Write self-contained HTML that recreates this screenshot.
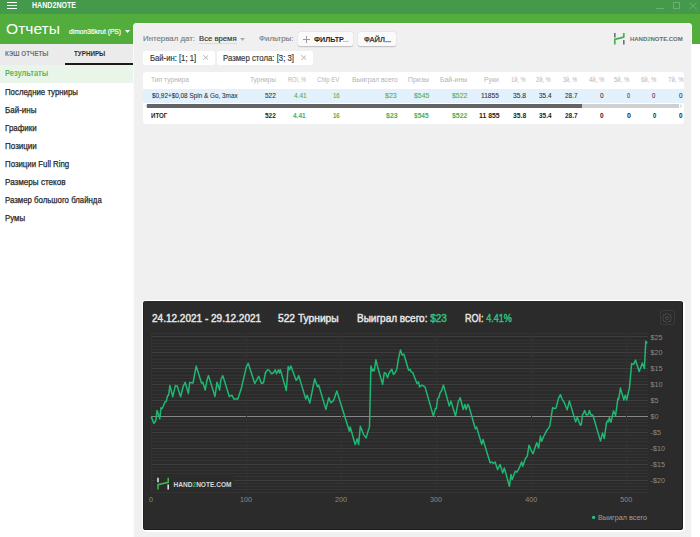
<!DOCTYPE html>
<html><head><meta charset="utf-8">
<style>
*{margin:0;padding:0;box-sizing:border-box}
html,body{width:700px;height:537px;overflow:hidden;background:#fff}
body{position:relative;font-family:"Liberation Sans",sans-serif;color:#333}
.a{position:absolute;white-space:nowrap}
.t{position:absolute;white-space:nowrap;line-height:1}
</style></head><body>

<!-- title bar -->
<div class="a" style="left:0;top:0;width:700px;height:14px;background:#45994b"></div>
<div class="a" style="left:7px;top:2px;width:10px;height:1.4px;background:#fff"></div>
<div class="a" style="left:7px;top:4.9px;width:10px;height:1.4px;background:#fff"></div>
<div class="a" style="left:7px;top:7.8px;width:10px;height:1.4px;background:#fff"></div>
<div class="a" style="left:656.3px;top:8px;width:7.3px;height:1px;background:rgba(255,255,255,.22)"></div>
<div class="a" style="left:673px;top:2px;width:7px;height:7px;border:1px solid rgba(255,255,255,.22)"></div>
<svg class="a" style="left:689px;top:2px" width="8" height="8" viewBox="0 0 8 8"><path d="M0.3,0.3 L7.7,7.3 M7.7,0.3 L0.3,7.3" stroke="rgba(255,255,255,.22)" stroke-width="1"/></svg>

<!-- header band -->
<div class="a" style="left:0;top:14px;width:700px;height:30px;background:#52ad3c"></div>
<svg class="a" style="left:124.5px;top:30px" width="5" height="3" viewBox="0 0 5 3"><path d="M0,0 H5 L2.5,3 Z" fill="#fff"/></svg>

<!-- sidebar -->
<div class="a" style="left:0;top:44px;width:134px;height:21px;background:#ebebeb"></div>
<div class="a" style="left:65px;top:63px;width:69px;height:2px;background:#1a1a1a"></div>
<div class="a" style="left:0;top:65px;width:134px;height:17.5px;background:#e9f5e9"></div>

<!-- main card -->
<div class="a" style="left:133px;top:22.5px;width:559px;height:530px;background:#f0f0f0;border:1px solid #fafafa;border-radius:3px"></div>
<div class="a" style="left:199px;top:43px;width:37.5px;height:1px;background:#dadada"></div>
<svg class="a" style="left:240px;top:37.8px" width="5" height="3" viewBox="0 0 5 3"><path d="M0,0 H5 L2.5,3 Z" fill="#aaa"/></svg>
<div class="a" style="left:298px;top:32px;width:55px;height:13.5px;background:#fafafa;border-radius:2px;box-shadow:0 0.8px 1.2px rgba(0,0,0,.22)"></div>
<svg class="a" style="left:302.5px;top:35.8px" width="7" height="7" viewBox="0 0 7 7"><path d="M3.5,0 V7 M0,3.5 H7" stroke="#9a9a9a" stroke-width="1"/></svg>
<div class="a" style="left:358px;top:32px;width:37.5px;height:13.5px;background:#fafafa;border-radius:2px;box-shadow:0 0.8px 1.2px rgba(0,0,0,.22)"></div>

<!-- logo -->
<svg class="a" style="left:610px;top:30px" width="20" height="18" viewBox="610 30 20 18">
<path d="M614.8,33 V37.4" stroke="#707070" stroke-width="1.6" fill="none"/>
<path d="M614.8,44.5 V39.3 L623.8,37.2 V33" stroke="#3fb54a" stroke-width="1.7" fill="none" stroke-linejoin="round"/>
<path d="M623.8,40 V44.4" stroke="#707070" stroke-width="1.6" fill="none"/>
</svg>

<!-- chips -->
<div class="a" style="left:143px;top:51px;width:71.7px;height:13.6px;background:#fff;border-radius:2px"></div>
<svg class="a" style="left:202.5px;top:55.2px" width="5.6" height="5.2" viewBox="0 0 5.6 5.2"><path d="M0.2,0.2 L5.4,5 M5.4,0.2 L0.2,5" stroke="#aaa" stroke-width="0.9"/></svg>
<div class="a" style="left:217px;top:51px;width:95.6px;height:13.6px;background:#fff;border-radius:2px"></div>
<svg class="a" style="left:300.6px;top:55.2px" width="5.6" height="5.2" viewBox="0 0 5.6 5.2"><path d="M0.2,0.2 L5.4,5 M5.4,0.2 L0.2,5" stroke="#aaa" stroke-width="0.9"/></svg>

<!-- table -->
<div class="a" style="left:143px;top:71.5px;width:540.5px;height:52.5px;background:#fff;border-radius:3px"></div>
<div class="a" style="left:143px;top:88.7px;width:540.5px;height:14.5px;background:#e3f1fc"></div>
<div class="a" style="left:147px;top:103.6px;width:532px;height:4.2px;background:#d0d0d0"></div>
<div class="a" style="left:147px;top:103.6px;width:435px;height:4.2px;background:#636363"></div>
<svg class="a" style="left:143.5px;top:104px" width="3" height="4" viewBox="0 0 3 4"><path d="M3,0 L0.5,2 L3,4Z" fill="#ddd"/></svg>
<svg class="a" style="left:680px;top:104px" width="3" height="4" viewBox="0 0 3 4"><path d="M0,0 L2.5,2 L0,4Z" fill="#ddd"/></svg>


<!-- chart panel -->
<div class="a" style="left:141.5px;top:299.5px;width:543px;height:232.5px;background:#fff;border-radius:5px"></div>
<div class="a" style="left:143px;top:301px;width:540px;height:229px;background:#2b2b2b;border-radius:3px;box-shadow:inset -1px -1px 0 #1c1c1c,inset 0.6px 0 0 #1e1e1e"></div>
<div class="a" style="left:659.7px;top:310.3px;width:15px;height:14.6px;border:1px solid #3a3a3a;border-radius:2px"></div>
<svg class="a" style="left:661px;top:311.7px" width="12" height="12" viewBox="-6 -6 12 12">
<g fill="none" stroke="#4a4a4a" stroke-width="1">
<path d="M0,-4.8 L1.2,-3.6 L3.4,-3.4 L3.6,-1.2 L4.8,0 L3.6,1.2 L3.4,3.4 L1.2,3.6 L0,4.8 L-1.2,3.6 L-3.4,3.4 L-3.6,1.2 L-4.8,0 L-3.6,-1.2 L-3.4,-3.4 L-1.2,-3.6 Z"/>
<circle cx="0" cy="0" r="1.5"/>
</g></svg>
<svg width="700" height="537" viewBox="0 0 700 537" style="position:absolute;left:0;top:0" font-family="Liberation Sans, sans-serif">
<line x1="151.0" y1="492.5" x2="648.0" y2="492.5" stroke="#333333" stroke-width="1"/><line x1="151.0" y1="489.5" x2="648.0" y2="489.5" stroke="#333333" stroke-width="1"/><line x1="151.0" y1="486.5" x2="648.0" y2="486.5" stroke="#333333" stroke-width="1"/><line x1="151.0" y1="483.5" x2="648.0" y2="483.5" stroke="#333333" stroke-width="1"/><line x1="151.0" y1="476.5" x2="648.0" y2="476.5" stroke="#333333" stroke-width="1"/><line x1="151.0" y1="473.5" x2="648.0" y2="473.5" stroke="#333333" stroke-width="1"/><line x1="151.0" y1="470.5" x2="648.0" y2="470.5" stroke="#333333" stroke-width="1"/><line x1="151.0" y1="467.5" x2="648.0" y2="467.5" stroke="#333333" stroke-width="1"/><line x1="151.0" y1="460.5" x2="648.0" y2="460.5" stroke="#333333" stroke-width="1"/><line x1="151.0" y1="457.5" x2="648.0" y2="457.5" stroke="#333333" stroke-width="1"/><line x1="151.0" y1="454.5" x2="648.0" y2="454.5" stroke="#333333" stroke-width="1"/><line x1="151.0" y1="451.5" x2="648.0" y2="451.5" stroke="#333333" stroke-width="1"/><line x1="151.0" y1="445.5" x2="648.0" y2="445.5" stroke="#333333" stroke-width="1"/><line x1="151.0" y1="441.5" x2="648.0" y2="441.5" stroke="#333333" stroke-width="1"/><line x1="151.0" y1="438.5" x2="648.0" y2="438.5" stroke="#333333" stroke-width="1"/><line x1="151.0" y1="435.5" x2="648.0" y2="435.5" stroke="#333333" stroke-width="1"/><line x1="151.0" y1="429.5" x2="648.0" y2="429.5" stroke="#333333" stroke-width="1"/><line x1="151.0" y1="425.5" x2="648.0" y2="425.5" stroke="#333333" stroke-width="1"/><line x1="151.0" y1="422.5" x2="648.0" y2="422.5" stroke="#333333" stroke-width="1"/><line x1="151.0" y1="419.5" x2="648.0" y2="419.5" stroke="#333333" stroke-width="1"/><line x1="151.0" y1="413.5" x2="648.0" y2="413.5" stroke="#333333" stroke-width="1"/><line x1="151.0" y1="410.5" x2="648.0" y2="410.5" stroke="#333333" stroke-width="1"/><line x1="151.0" y1="406.5" x2="648.0" y2="406.5" stroke="#333333" stroke-width="1"/><line x1="151.0" y1="403.5" x2="648.0" y2="403.5" stroke="#333333" stroke-width="1"/><line x1="151.0" y1="397.5" x2="648.0" y2="397.5" stroke="#333333" stroke-width="1"/><line x1="151.0" y1="394.5" x2="648.0" y2="394.5" stroke="#333333" stroke-width="1"/><line x1="151.0" y1="390.5" x2="648.0" y2="390.5" stroke="#333333" stroke-width="1"/><line x1="151.0" y1="387.5" x2="648.0" y2="387.5" stroke="#333333" stroke-width="1"/><line x1="151.0" y1="381.5" x2="648.0" y2="381.5" stroke="#333333" stroke-width="1"/><line x1="151.0" y1="378.5" x2="648.0" y2="378.5" stroke="#333333" stroke-width="1"/><line x1="151.0" y1="375.5" x2="648.0" y2="375.5" stroke="#333333" stroke-width="1"/><line x1="151.0" y1="371.5" x2="648.0" y2="371.5" stroke="#333333" stroke-width="1"/><line x1="151.0" y1="365.5" x2="648.0" y2="365.5" stroke="#333333" stroke-width="1"/><line x1="151.0" y1="362.5" x2="648.0" y2="362.5" stroke="#333333" stroke-width="1"/><line x1="151.0" y1="359.5" x2="648.0" y2="359.5" stroke="#333333" stroke-width="1"/><line x1="151.0" y1="355.5" x2="648.0" y2="355.5" stroke="#333333" stroke-width="1"/><line x1="151.0" y1="349.5" x2="648.0" y2="349.5" stroke="#333333" stroke-width="1"/><line x1="151.0" y1="346.5" x2="648.0" y2="346.5" stroke="#333333" stroke-width="1"/><line x1="151.0" y1="343.5" x2="648.0" y2="343.5" stroke="#333333" stroke-width="1"/><line x1="151.0" y1="340.5" x2="648.0" y2="340.5" stroke="#333333" stroke-width="1"/><line x1="151.0" y1="333.5" x2="648.0" y2="333.5" stroke="#333333" stroke-width="1"/><line x1="151.0" y1="480.5" x2="648.0" y2="480.5" stroke="#3e3e3e" stroke-width="1"/><line x1="151.0" y1="464.5" x2="648.0" y2="464.5" stroke="#3e3e3e" stroke-width="1"/><line x1="151.0" y1="448.5" x2="648.0" y2="448.5" stroke="#3e3e3e" stroke-width="1"/><line x1="151.0" y1="432.5" x2="648.0" y2="432.5" stroke="#3e3e3e" stroke-width="1"/><line x1="151.0" y1="400.5" x2="648.0" y2="400.5" stroke="#3e3e3e" stroke-width="1"/><line x1="151.0" y1="384.5" x2="648.0" y2="384.5" stroke="#3e3e3e" stroke-width="1"/><line x1="151.0" y1="368.5" x2="648.0" y2="368.5" stroke="#3e3e3e" stroke-width="1"/><line x1="151.0" y1="352.5" x2="648.0" y2="352.5" stroke="#3e3e3e" stroke-width="1"/><line x1="151.0" y1="336.5" x2="648.0" y2="336.5" stroke="#3e3e3e" stroke-width="1"/><line x1="151.0" y1="416.5" x2="648.0" y2="416.5" stroke="#888888" stroke-width="1"/><line x1="151.5" y1="333.0" x2="151.5" y2="492.5" stroke="#323232" stroke-width="1"/><line x1="246.5" y1="333.0" x2="246.5" y2="492.5" stroke="#323232" stroke-width="1"/><line x1="341.5" y1="333.0" x2="341.5" y2="492.5" stroke="#323232" stroke-width="1"/><line x1="436.5" y1="333.0" x2="436.5" y2="492.5" stroke="#323232" stroke-width="1"/><line x1="531.5" y1="333.0" x2="531.5" y2="492.5" stroke="#323232" stroke-width="1"/><line x1="626.5" y1="333.0" x2="626.5" y2="492.5" stroke="#323232" stroke-width="1"/>
<text x="650.5" y="482.6" fill="#8a8a8a" font-size="7.2">-$20</text><text x="650.5" y="466.7" fill="#8a8a8a" font-size="7.2">-$15</text><text x="650.5" y="450.8" fill="#8a8a8a" font-size="7.2">-$10</text><text x="650.5" y="434.9" fill="#8a8a8a" font-size="7.2">-$5</text><text x="650.5" y="419.0" fill="#8a8a8a" font-size="7.2">$0</text><text x="650.5" y="403.1" fill="#8a8a8a" font-size="7.2">$5</text><text x="650.5" y="387.2" fill="#8a8a8a" font-size="7.2">$10</text><text x="650.5" y="371.3" fill="#8a8a8a" font-size="7.2">$15</text><text x="650.5" y="355.4" fill="#8a8a8a" font-size="7.2">$20</text><text x="650.5" y="339.5" fill="#8a8a8a" font-size="7.2">$25</text>
<text x="151.0" y="502" fill="#8a8a8a" font-size="7.2" text-anchor="middle">0</text><text x="246.0" y="502" fill="#8a8a8a" font-size="7.2" text-anchor="middle">100</text><text x="341.1" y="502" fill="#8a8a8a" font-size="7.2" text-anchor="middle">200</text><text x="436.1" y="502" fill="#8a8a8a" font-size="7.2" text-anchor="middle">300</text><text x="531.2" y="502" fill="#8a8a8a" font-size="7.2" text-anchor="middle">400</text><text x="626.2" y="502" fill="#8a8a8a" font-size="7.2" text-anchor="middle">500</text>
<path d="M151.3,416.9 L153.9,423.4 L155.8,420.8 L157.1,410.4 L159.7,418.9 L161,407.8 L162.3,408.5 L165,402 L166.3,401.3 L167.6,395.4 L168.6,395.4 L169.9,385.6 L172.8,396.7 L175.4,385.6 L177.3,386.3 L180.6,396.7 L183.2,386.3 L185.2,382.4 L188.4,393.5 L189.7,382.4 L193,383 L196.2,366.1 L201.5,383 L202.8,382.4 L205.2,390 L207.2,379.5 L208.5,375.6 L215,396.5 L217,382.2 L219.6,390 L220.9,379.5 L222.8,375.6 L229.3,396.5 L231.9,395.2 L233.9,399.1 L237.8,399.1 L241.1,389.3 L246.3,367.2 L248.2,363.3 L254.8,383.5 L257,379.5 L258.7,376.3 L261.5,383.5 L263.5,382.8 L265.4,373 L267.4,369.8 L269.3,370.4 L271.3,373.7 L273.3,373 L275.2,369.8 L276.5,373.7 L278.5,369.8 L279.5,373 L280.4,369.8 L286.3,390.6 L288.2,366.5 L289.6,369.8 L290.9,365.9 L296.1,380.2 L297.4,378.9 L298.7,375.6 L305.8,399.1 L307.2,395.2 L309.8,403 L314.7,378.8 L317.5,386.8 L318.7,385.1 L325.9,409.4 L328.8,397.7 L330.9,402.7 L333.1,401.1 L334.3,398.5 L336.8,391 L349.4,431.2 L350.2,427 L355.2,444.6 L357.3,438.8 L358.6,444.6 L360.3,426.2 L363.6,434.6 L366.1,437.9 L367.8,432.1 L369.5,427 L370.9,366 L372.5,371 L373.4,369.3 L374.2,371 L375.9,359.8 L377.6,366.8 L382.6,384.4 L384.3,372.7 L385.9,373.5 L387.6,377.7 L388.8,373.5 L391.8,369.3 L393.5,374.4 L395.2,372.7 L396.8,369.3 L398.5,358.4 L400.5,350 L402.2,355.1 L403.9,354.2 L408.6,370.2 L410.2,369.3 L411.1,371.8 L412.8,372.7 L417,383.6 L418.6,381.9 L419.5,386.9 L422,385.2 L425,386.9 L433.4,416.1 L435.4,408.6 L436.4,408.6 L437.6,398.5 L438.8,397.7 L440.1,392.7 L441.5,391 L443.5,385.1 L449.3,406.1 L451,401.1 L455.5,416.1 L458.2,401.9 L460.2,397.7 L463.2,409.4 L464.9,404.4 L466.1,409.4 L467.8,404.4 L468.9,406.1 L475.3,428.7 L476.6,427 L481.7,444.4 L483,439.4 L490.1,462.8 L491.8,462 L493.4,463.3 L495.1,462 L497.6,469.5 L500.1,464.5 L502.7,472.9 L504.3,467.9 L509.4,486.3 L511,474.6 L512.2,479.6 L515.2,471.2 L516.9,472.1 L518.9,468.7 L521.6,462 L522.8,466.2 L525.3,458.7 L527.3,456.1 L529,445.2 L531.1,450.3 L533,453.7 L536.7,442.8 L538.7,447.9 L540.4,436.1 L541.7,441.2 L543.4,437 L546.8,430.3 L548.1,428.6 L549.8,426.1 L552.6,407.7 L554.3,408.5 L556,408.2 L558.5,398.4 L560.5,394.7 L562.2,399.3 L563.9,401.8 L567.2,409.8 L569.4,400.9 L575.6,421.9 L577.3,417.2 L580.3,425.2 L581.3,424.7 L582.5,414.7 L583.4,413.8 L584.6,410.5 L586.5,415.1 L588,414.7 L589.4,410.5 L590.9,415.1 L592.2,414.7 L593,415.5 L600.5,441.1 L602.5,433.1 L604.3,438.6 L606.4,423.1 L607.7,420.5 L608.5,421.8 L609.3,417.6 L611,422.2 L613.5,410.9 L615.6,415.5 L617.9,398.5 L618.7,399.2 L620.4,388.1 L623.9,400 L625.3,395.1 L626.7,400 L629.5,387.4 L631.6,363.6 L633,364.3 L634.1,363.6 L635.5,360.1 L639.2,371.6 L642.4,362.9 L644.4,368.5 L645.8,341.3 L646.9,342.7" fill="none" stroke="#1fb873" stroke-width="1.5" stroke-linejoin="round" stroke-linecap="round"/>
<rect x="154" y="476" width="80" height="16" fill="#2b2b2b" fill-opacity="0.85"/>
<g stroke-width="1.6" fill="none">
<path d="M158,477.8 V482.3" stroke="#e0e0e0"/>
<path d="M158,489.6 V484.6 L168.2,482.3 V477.8" stroke="#3fb54a"/>
<path d="M168.2,484.6 V489.6" stroke="#e0e0e0"/>
</g>
<text x="173.5" y="486.8" fill="#d8d8d8" font-size="7" font-weight="bold" textLength="58" lengthAdjust="spacingAndGlyphs">HAND<tspan fill="#3fb54a">2</tspan>NOTE.COM</text>
<circle cx="593.6" cy="517.4" r="1.6" fill="#1fc77a"/>
<text x="598" y="520.2" fill="#a0a0a0" font-size="7.6" textLength="49" lengthAdjust="spacingAndGlyphs">Выиграл всего</text>
</svg>
<div class="t" id="h2n" style="left:32.00px;top:1.08px;font-size:8.7px;font-weight:bold;color:#fff;transform-origin:0 0;transform:scaleX(0.8148)">HAND2NOTE</div>
<div class="t" id="otch" style="left:5.51px;top:21.14px;font-size:15.0px;font-weight:normal;color:#fff;transform-origin:0 0;transform:scaleX(1.0399)">Отчеты</div>
<div class="t" id="dimon" style="left:68.52px;top:28.26px;font-size:8.0px;font-weight:normal;color:#fff;transform-origin:0 0;transform:scaleX(0.8359);-webkit-text-stroke:0.2px #fff">dimon36krut (PS)</div>
<div class="t" id="kesh" style="left:5.03px;top:49.75px;font-size:7.2px;font-weight:bold;color:#707070;transform-origin:0 0;transform:scaleX(0.8682)">КЭШ ОТЧЕТЫ</div>
<div class="t" id="turn" style="left:74.00px;top:49.75px;font-size:7.2px;font-weight:bold;color:#2a2a2a;transform-origin:0 0;transform:scaleX(0.8705)">ТУРНИРЫ</div>
<div class="t" id="s1" style="left:4.99px;top:69.39px;font-size:8.6px;font-weight:bold;color:#5cb85c;transform-origin:0 0;transform:scaleX(0.8703)">Результаты</div>
<div class="t" id="s2" style="left:5.00px;top:88.24px;font-size:9.0px;font-weight:normal;color:#262626;transform-origin:0 0;transform:scaleX(0.8688);-webkit-text-stroke:0.25px #262626">Последние турниры</div>
<div class="t" id="s3" style="left:5.00px;top:106.24px;font-size:9.0px;font-weight:normal;color:#262626;transform-origin:0 0;transform:scaleX(0.8873);-webkit-text-stroke:0.25px #262626">Бай-ины</div>
<div class="t" id="s4" style="left:5.00px;top:123.94px;font-size:9.0px;font-weight:normal;color:#262626;transform-origin:0 0;transform:scaleX(0.8889);-webkit-text-stroke:0.25px #262626">Графики</div>
<div class="t" id="s5" style="left:5.00px;top:141.94px;font-size:9.0px;font-weight:normal;color:#262626;transform-origin:0 0;transform:scaleX(0.8905);-webkit-text-stroke:0.25px #262626">Позиции</div>
<div class="t" id="s6" style="left:5.00px;top:160.34px;font-size:9.0px;font-weight:normal;color:#262626;transform-origin:0 0;transform:scaleX(0.8699);-webkit-text-stroke:0.25px #262626">Позиции Full Ring</div>
<div class="t" id="s7" style="left:5.00px;top:178.24px;font-size:9.0px;font-weight:normal;color:#262626;transform-origin:0 0;transform:scaleX(0.9004);-webkit-text-stroke:0.25px #262626">Размеры стеков</div>
<div class="t" id="s8" style="left:5.00px;top:195.94px;font-size:9.0px;font-weight:normal;color:#262626;transform-origin:0 0;transform:scaleX(0.8685);-webkit-text-stroke:0.25px #262626">Размер большого блайнда</div>
<div class="t" id="s9" style="left:5.00px;top:213.94px;font-size:9.0px;font-weight:normal;color:#262626;transform-origin:0 0;transform:scaleX(0.8732);-webkit-text-stroke:0.25px #262626">Румы</div>
<div class="t" id="interval" style="left:142.50px;top:34.76px;font-size:8.0px;font-weight:normal;color:#7c7c7c;transform-origin:0 0;transform:scaleX(0.9818);-webkit-text-stroke:0.15px #7c7c7c">Интервал дат:</div>
<div class="t" id="vse" style="left:199.03px;top:34.76px;font-size:8.0px;font-weight:normal;color:#333;transform-origin:0 0;transform:scaleX(0.9645);-webkit-text-stroke:0.15px #333">Все время</div>
<div class="t" id="filt" style="left:259.00px;top:34.76px;font-size:8.0px;font-weight:normal;color:#7c7c7c;transform-origin:0 0;transform:scaleX(0.9895);-webkit-text-stroke:0.15px #7c7c7c">Фильтры:</div>
<div class="t" id="fb1" style="left:313.51px;top:35.58px;font-size:7.0px;font-weight:bold;color:#222;transform-origin:0 0;transform:scaleX(1.0247)">ФИЛЬТР<span style="color:#9a9a9a">...</span></div>
<div class="t" id="fb2" style="left:364.00px;top:35.58px;font-size:7.0px;font-weight:normal;color:#2a2a2a;transform-origin:0 0;transform:scaleX(1.0741);-webkit-text-stroke:0.25px #2a2a2a">ФАЙЛ...</div>
<div class="t" id="logo" style="left:629.50px;top:37.24px;font-size:5.6px;font-weight:bold;color:#6a6a6a;transform-origin:0 0;transform:scaleX(1.0657)">HAND<span style="color:#3fb54a">2</span>NOTE.COM</div>
<div class="t" id="chip1" style="left:149.52px;top:54.94px;font-size:8.2px;font-weight:normal;color:#333;transform-origin:0 0;transform:scaleX(0.9388);-webkit-text-stroke:0.15px #333">Бай-ин: [1; 1]</div>
<div class="t" id="chip2" style="left:223.02px;top:54.94px;font-size:8.2px;font-weight:normal;color:#333;transform-origin:0 0;transform:scaleX(0.9516);-webkit-text-stroke:0.15px #333">Размер стола: [3; 3]</div>
<div class="t" id="h0" style="left:151.49px;top:76.08px;font-size:7.0px;font-weight:normal;color:#b4b4b4;transform-origin:0 0;transform:scaleX(0.9558)">Тип турнира</div>
<div class="t" id="h1" style="left:249.50px;top:76.08px;font-size:7.0px;font-weight:normal;color:#b4b4b4;transform-origin:0 0;transform:scaleX(0.9273)">Турниры</div>
<div class="t" id="h2" style="left:287.51px;top:76.08px;font-size:7.0px;font-weight:normal;color:#b4b4b4;transform-origin:0 0;transform:scaleX(0.8012)">ROI, %</div>
<div class="t" id="h3" style="left:317.46px;top:76.08px;font-size:7.0px;font-weight:normal;color:#b4b4b4;transform-origin:0 0;transform:scaleX(0.8701)">Chip EV</div>
<div class="t" id="h4" style="left:351.50px;top:76.08px;font-size:7.0px;font-weight:normal;color:#b4b4b4;transform-origin:0 0;transform:scaleX(0.9667)">Выиграл всего</div>
<div class="t" id="h5" style="left:407.50px;top:76.08px;font-size:7.0px;font-weight:normal;color:#b4b4b4;transform-origin:0 0;transform:scaleX(0.9937)">Призы</div>
<div class="t" id="h6" style="left:440.00px;top:76.08px;font-size:7.0px;font-weight:normal;color:#b4b4b4;transform-origin:0 0;transform:scaleX(0.9859)">Бай-ины</div>
<div class="t" id="h7" style="left:484.00px;top:76.08px;font-size:7.0px;font-weight:normal;color:#b4b4b4;transform-origin:0 0;transform:scaleX(0.9756)">Руки</div>
<div class="t" id="h8" style="left:510.59px;top:76.08px;font-size:7.0px;font-weight:normal;color:#b4b4b4;transform-origin:0 0;transform:scaleX(0.8179)">1й, %</div>
<div class="t" id="h9" style="left:536.15px;top:76.08px;font-size:7.0px;font-weight:normal;color:#b4b4b4;transform-origin:0 0;transform:scaleX(0.8179)">2й, %</div>
<div class="t" id="h10" style="left:563.05px;top:76.08px;font-size:7.0px;font-weight:normal;color:#b4b4b4;transform-origin:0 0;transform:scaleX(0.7843)">3й, %</div>
<div class="t" id="h11" style="left:589.08px;top:76.08px;font-size:7.0px;font-weight:normal;color:#b4b4b4;transform-origin:0 0;transform:scaleX(0.8494)">4й, %</div>
<div class="t" id="h12" style="left:614.49px;top:76.08px;font-size:7.0px;font-weight:normal;color:#b4b4b4;transform-origin:0 0;transform:scaleX(0.8574)">5й, %</div>
<div class="t" id="h13" style="left:641.00px;top:76.08px;font-size:7.0px;font-weight:normal;color:#b4b4b4;transform-origin:0 0;transform:scaleX(0.8494)">6й, %</div>
<div class="t" id="h14" style="left:667.61px;top:76.08px;font-size:7.0px;font-weight:normal;color:#b4b4b4;transform-origin:0 0;transform:scaleX(0.8752)">7й, %</div>
<div class="t" id="r0" style="left:151.52px;top:92.23px;font-size:7.4px;font-weight:normal;color:#303030;transform-origin:0 0;transform:scaleX(0.8628);-webkit-text-stroke:0.08px currentColor">$0,92+$0,08 Spin &amp; Go, 3max</div>
<div class="t" id="r1" style="left:265.01px;top:92.23px;font-size:7.4px;font-weight:normal;color:#303030;transform-origin:0 0;transform:scaleX(0.8789);-webkit-text-stroke:0.08px currentColor">522</div>
<div class="t" id="r2" style="left:293.53px;top:92.23px;font-size:7.4px;font-weight:normal;color:#4caf50;transform-origin:0 0;transform:scaleX(0.8793);-webkit-text-stroke:0.08px currentColor">4.41</div>
<div class="t" id="r3" style="left:332.65px;top:92.23px;font-size:7.4px;font-weight:normal;color:#4caf50;transform-origin:0 0;transform:scaleX(0.8171);-webkit-text-stroke:0.08px currentColor">16</div>
<div class="t" id="r4" style="left:385.04px;top:92.23px;font-size:7.4px;font-weight:normal;color:#4caf50;transform-origin:0 0;transform:scaleX(0.9433);-webkit-text-stroke:0.08px currentColor">$23</div>
<div class="t" id="r5" style="left:414.03px;top:92.23px;font-size:7.4px;font-weight:normal;color:#4caf50;transform-origin:0 0;transform:scaleX(0.9375);-webkit-text-stroke:0.08px currentColor">$545</div>
<div class="t" id="r6" style="left:451.51px;top:92.23px;font-size:7.4px;font-weight:normal;color:#4caf50;transform-origin:0 0;transform:scaleX(0.9375);-webkit-text-stroke:0.08px currentColor">$522</div>
<div class="t" id="r7" style="left:480.55px;top:92.23px;font-size:7.4px;font-weight:normal;color:#303030;transform-origin:0 0;transform:scaleX(0.8933);-webkit-text-stroke:0.08px currentColor">11855</div>
<div class="t" id="r8" style="left:512.50px;top:92.23px;font-size:7.4px;font-weight:normal;color:#303030;transform-origin:0 0;transform:scaleX(0.9082);-webkit-text-stroke:0.08px currentColor">35.8</div>
<div class="t" id="r9" style="left:539.11px;top:92.23px;font-size:7.4px;font-weight:normal;color:#303030;transform-origin:0 0;transform:scaleX(0.8668);-webkit-text-stroke:0.08px currentColor">35.4</div>
<div class="t" id="r10" style="left:565.11px;top:92.23px;font-size:7.4px;font-weight:normal;color:#303030;transform-origin:0 0;transform:scaleX(0.8668);-webkit-text-stroke:0.08px currentColor">28.7</div>
<div class="t" id="r11" style="left:599.67px;top:92.23px;font-size:7.4px;font-weight:normal;color:#303030;transform-origin:0 0;transform:scaleX(0.8670);-webkit-text-stroke:0.08px currentColor">0</div>
<div class="t" id="r12" style="left:626.82px;top:92.23px;font-size:7.4px;font-weight:normal;color:#303030;transform-origin:0 0;transform:scaleX(0.7230);-webkit-text-stroke:0.08px currentColor">0</div>
<div class="t" id="r13" style="left:652.18px;top:92.23px;font-size:7.4px;font-weight:normal;color:#303030;transform-origin:0 0;transform:scaleX(0.7958);-webkit-text-stroke:0.08px currentColor">0</div>
<div class="t" id="r14" style="left:679.00px;top:92.23px;font-size:7.4px;font-weight:normal;color:#303030;transform-origin:0 0;transform:scaleX(0.8665);-webkit-text-stroke:0.08px currentColor">0</div>
<div class="t" id="t0" style="left:151.49px;top:112.23px;font-size:7.4px;font-weight:bold;color:#1e1e1e;transform-origin:0 0;transform:scaleX(0.8348)">ИТОГ</div>
<div class="t" id="t1" style="left:264.93px;top:112.23px;font-size:7.4px;font-weight:bold;color:#1e1e1e;transform-origin:0 0;transform:scaleX(0.8789)">522</div>
<div class="t" id="t2" style="left:293.47px;top:112.23px;font-size:7.4px;font-weight:bold;color:#4caf50;transform-origin:0 0;transform:scaleX(0.8793)">4.41</div>
<div class="t" id="t3" style="left:332.53px;top:112.23px;font-size:7.4px;font-weight:bold;color:#4caf50;transform-origin:0 0;transform:scaleX(0.8171)">16</div>
<div class="t" id="t4" style="left:385.90px;top:112.23px;font-size:7.4px;font-weight:bold;color:#4caf50;transform-origin:0 0;transform:scaleX(0.9499)">$23</div>
<div class="t" id="t5" style="left:413.93px;top:112.23px;font-size:7.4px;font-weight:bold;color:#4caf50;transform-origin:0 0;transform:scaleX(0.8824)">$545</div>
<div class="t" id="t6" style="left:451.51px;top:112.23px;font-size:7.4px;font-weight:bold;color:#4caf50;transform-origin:0 0;transform:scaleX(0.9375)">$522</div>
<div class="t" id="t7" style="left:478.55px;top:112.23px;font-size:7.4px;font-weight:bold;color:#1e1e1e;transform-origin:0 0;transform:scaleX(0.9307)">11 855</div>
<div class="t" id="t8" style="left:512.51px;top:112.23px;font-size:7.4px;font-weight:bold;color:#1e1e1e;transform-origin:0 0;transform:scaleX(0.9129)">35.8</div>
<div class="t" id="t9" style="left:539.06px;top:112.23px;font-size:7.4px;font-weight:bold;color:#1e1e1e;transform-origin:0 0;transform:scaleX(0.8668)">35.4</div>
<div class="t" id="t10" style="left:564.89px;top:112.23px;font-size:7.4px;font-weight:bold;color:#1e1e1e;transform-origin:0 0;transform:scaleX(0.8764)">28.7</div>
<div class="t" id="t11" style="left:599.64px;top:112.23px;font-size:7.4px;font-weight:bold;color:#1e1e1e;transform-origin:0 0;transform:scaleX(0.8670)">0</div>
<div class="t" id="t12" style="left:626.96px;top:112.23px;font-size:7.4px;font-weight:bold;color:#1e1e1e;transform-origin:0 0;transform:scaleX(0.9640)">0</div>
<div class="t" id="t13" style="left:652.95px;top:112.23px;font-size:7.4px;font-weight:bold;color:#1e1e1e;transform-origin:0 0;transform:scaleX(0.7958)">0</div>
<div class="t" id="t14" style="left:679.00px;top:112.23px;font-size:7.4px;font-weight:bold;color:#1e1e1e;transform-origin:0 0;transform:scaleX(0.8665)">0</div>
<div class="t" id="ct1" style="left:151.51px;top:312.73px;font-size:10.8px;font-weight:normal;color:#e6e6e6;transform-origin:0 0;transform:scaleX(0.9273);-webkit-text-stroke:0.45px #e6e6e6">24.12.2021 - 29.12.2021</div>
<div class="t" id="ct2" style="left:277.51px;top:312.73px;font-size:10.8px;font-weight:normal;color:#e6e6e6;transform-origin:0 0;transform:scaleX(0.9468);-webkit-text-stroke:0.45px #e6e6e6">522 Турниры</div>
<div class="t" id="ct3" style="left:357.06px;top:312.73px;font-size:10.8px;font-weight:normal;color:#e6e6e6;transform-origin:0 0;transform:scaleX(0.9272);-webkit-text-stroke:0.45px currentColor">Выиграл всего: <span style="color:#2ec27e">$23</span></div>
<div class="t" id="ct4" style="left:465.05px;top:312.73px;font-size:10.8px;font-weight:normal;color:#e6e6e6;transform-origin:0 0;transform:scaleX(0.8399);-webkit-text-stroke:0.45px currentColor">ROI: <span style="color:#2ec27e">4.41%</span></div>
</body></html>
